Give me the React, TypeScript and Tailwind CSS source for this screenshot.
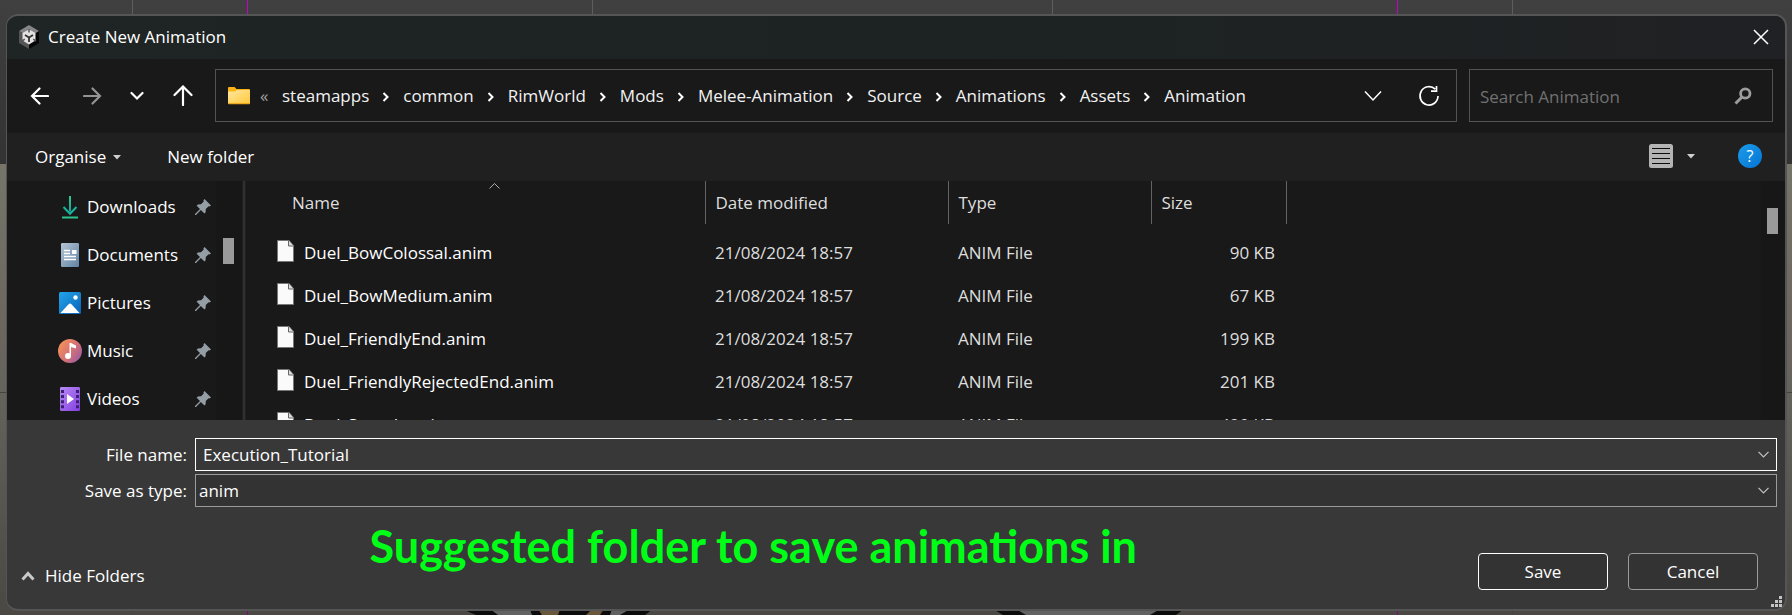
import React from "react";

const crumbs = ["steamapps", "common", "RimWorld", "Mods", "Melee-Animation", "Source", "Animations", "Assets", "Animation"];

const files = [
  { name: "Duel_BowColossal.anim", size: "90 KB" },
  { name: "Duel_BowMedium.anim", size: "67 KB" },
  { name: "Duel_FriendlyEnd.anim", size: "199 KB" },
  { name: "Duel_FriendlyRejectedEnd.anim", size: "201 KB" },
  { name: "Duel_Swords.anim", size: "420 KB" },
];

function UnityIcon() {
  return (
    <svg width="20" height="24" viewBox="0 0 20 24">
      <path d="M10 0 20 6V18L10 24V12Z" fill="#060606" />
      <path d="M10 0 20 6 10 12 0 6Z" fill="#868686" />
      <path d="M0 6 10 12V24L0 18Z" fill="#555" />
      <path d="M10 4.500 16.500 8V15.500L10 19.500 3.500 15.500V8Z" fill="#e2e2e2" />
      <path d="M10 12.500v4.500M10 12.500 6 10M10 12.500l4-2.500" stroke="#333" strokeWidth="1.800" />
      <path d="M10 4v3.500M3 16l2.800-1.800M17 16l-2.800-1.800" stroke="#555" strokeWidth="1.500" />
    </svg>
  );
}

function FolderIcon() {
  return (
    <svg width="22" height="18" viewBox="0 0 22 18" className="shrink-0">
      <defs>
        <linearGradient id="fold" x1="0" y1="0" x2="1" y2="1">
          <stop offset="0" stopColor="#ffe7a0" />
          <stop offset="1" stopColor="#ffc93c" />
        </linearGradient>
      </defs>
      <path d="M0 1q0-1 1-1h5.500l2 2H21q1 0 1 1v5H0Z" fill="#fbb416" />
      <path d="M0 4.500h7L9 3h13v13H0Z" fill="url(#fold)" />
      <path d="M0 16h22v.500q0 .800-.800.800H.800Q0 17.300 0 16.500Z" fill="#f0a81a" />
    </svg>
  );
}

function Crumb({ text, last }: { text: string; last: boolean }) {
  return (
    <li className="flex items-center">
      <a href="#" className="text-[#f2f2f2]">{text}</a>
      {!last && (
        <svg width="34" height="12" viewBox="0 0 34 12" className="mt-0.5">
          <path d="m14.500 2 4 4-4 4" fill="none" stroke="#fff" strokeWidth="2" />
        </svg>
      )}
    </li>
  );
}

function Pin() {
  return (
    <svg width="16" height="16" viewBox="0 0 16 16" className="shrink-0">
      <path d="M9.500 0 16 6.500 14.500 7.600 13.600 7.200 10.800 10 10.600 13.300 9.400 14.400 5.900 11 1 16H0v-1L5 10.100 1.700 6.700 2.800 5.500 6 5.300 8.800 2.500 8.400 1.400Z" fill="#949ea5" />
    </svg>
  );
}

function DownloadsIcon() {
  return (
    <svg width="22" height="24" viewBox="0 0 22 24">
      <defs>
        <linearGradient id="dl" x1="0" y1="0" x2="0" y2="1">
          <stop offset="0" stopColor="#2fc98a" />
          <stop offset="1" stopColor="#10a5a0" />
        </linearGradient>
      </defs>
      <path d="M10 1h2v15.500h-2Z" fill="url(#dl)" />
      <path d="m4.500 12 6.500 6.800 6.500-6.800" fill="none" stroke="#17b49a" strokeWidth="2" />
      <path d="M3 21.500h16v2H3Z" fill="#2cc48e" />
    </svg>
  );
}

function DocumentsIcon() {
  return (
    <svg width="22" height="24" viewBox="0 0 22 24">
      <defs>
        <linearGradient id="doc" x1="0" y1="0" x2="1" y2="1">
          <stop offset="0" stopColor="#b4c6d6" />
          <stop offset="1" stopColor="#6283a3" />
        </linearGradient>
      </defs>
      <rect x="2" width="18" height="24" rx="1.200" fill="url(#doc)" />
      <path d="M5 7.500h6M5 10.500h6M5 13.500h12M5 16.500h12" stroke="#fff" strokeWidth="1.300" />
      <rect x="13" y="7" width="4.500" height="4" fill="#fff" />
    </svg>
  );
}

function PicturesIcon() {
  return (
    <svg width="22" height="24" viewBox="0 0 22 24">
      <defs>
        <linearGradient id="pic" x1="0" y1="0" x2="1" y2="1">
          <stop offset="0" stopColor="#22a5ea" />
          <stop offset="1" stopColor="#0a62b8" />
        </linearGradient>
      </defs>
      <rect y="1" width="22" height="22" rx="1.500" fill="url(#pic)" />
      <path d="m1.500 22 8.300-9q1.200-1.200 2.400 0l8.300 9Z" fill="#fff" />
      <circle cx="16.500" cy="6.500" r="2.200" fill="#fff" />
    </svg>
  );
}

function MusicIcon() {
  return (
    <svg width="24" height="24" viewBox="0 0 24 24" className="-mx-px">
      <defs>
        <linearGradient id="mus" x1="0" y1="0.200" x2="1" y2="0.900">
          <stop offset="0" stopColor="#f79256" />
          <stop offset="0.600" stopColor="#cd6d7c" />
          <stop offset="1" stopColor="#9159ab" />
        </linearGradient>
      </defs>
      <circle cx="12" cy="12" r="12" fill="url(#mus)" />
      <circle cx="10" cy="17" r="3" fill="#fff" />
      <path d="M11.500 4h1.500l5 2.500v3l-5-1.600V17h-1.500Z" fill="#fff" />
    </svg>
  );
}

function VideosIcon() {
  return (
    <svg width="22" height="24" viewBox="0 0 22 24">
      <defs>
        <linearGradient id="vid" x1="0" y1="0" x2="1" y2="1">
          <stop offset="0" stopColor="#b98af5" />
          <stop offset="1" stopColor="#8340e0" />
        </linearGradient>
      </defs>
      <rect x="1" width="20" height="24" rx="1.300" fill="url(#vid)" />
      <path d="M3.500 3v18.500M18.500 3v18.500" stroke="#3c2170" strokeWidth="3" strokeDasharray="3 2.100" />
      <path d="M8 7v10l7-5Z" fill="#fff" />
    </svg>
  );
}

const places = [
  { name: "Downloads", icon: <DownloadsIcon /> },
  { name: "Documents", icon: <DocumentsIcon /> },
  { name: "Pictures", icon: <PicturesIcon /> },
  { name: "Music", icon: <MusicIcon /> },
  { name: "Videos", icon: <VideosIcon /> },
];

function FileIcon() {
  return (
    <svg width="17" height="22" viewBox="0 0 17 22" className="mb-1 shrink-0">
      <path d="M.500.500H12L16.500 5.500v16H.500Z" fill="#fafafa" stroke="#777" />
      <path d="M11.500.500v5.500h5" fill="#dcdcdc" stroke="#666" />
    </svg>
  );
}

function Caret() {
  return (
    <svg width="8" height="5" viewBox="0 0 8 5">
      <path d="M0 0h8L4 4.500Z" fill="#d0d0d0" />
    </svg>
  );
}

function ComboArrow() {
  return (
    <svg width="11" height="7" viewBox="0 0 11 7" className="pointer-events-none absolute right-2 top-[13px]">
      <path d="m.500.800 5 5 5-5" fill="none" stroke="#c4c4c4" strokeWidth="1.200" />
    </svg>
  );
}

function Backdrop() {
  return (
    <div className="absolute inset-0 -z-10 flex flex-col bg-[#5f5c56]" aria-hidden="true">
      <div className="h-[164px] bg-linear-to-b from-[#404040] to-[#333333]" />
      <div className="flex-1 bg-linear-to-b from-[#777469] via-[#66625c] to-[#4b4844]" />
      <svg className="absolute inset-0 size-full" viewBox="0 0 1792 615" preserveAspectRatio="none">
        <path d="M132.500 0v164M592.500 0v164M1052.500 0v164M1512.500 0v164" stroke="#5e5e5e" />
        <path d="M132.500 609v6M1512.500 609v6M0 392.500h6M1786 392.500h6" stroke="#45433f" />
        <path d="M462 609h178l-4 6H476ZM628 609h25l-8 6h-25ZM993 609h191l-8 6h-173Z" fill="#0b0b0b" />
        <path d="M490 609h40l2 6h-34ZM612 609h18l-10 6h-10ZM1016 609h144l-10 6h-124Z" fill="#626262" />
        <path d="M538 609h22l-2 6h-16ZM592 609h12l-4 6h-14Z" fill="#6a563a" />
        <path d="M247.500 0v14M1397.500 0v14" stroke="#c800c8" />
        <path d="M247.500 609v6M1397.500 609v6" stroke="#7d0a7d" />
      </svg>
    </div>
  );
}

export default function App() {
  return (
    <div className="relative isolate min-h-screen overflow-hidden pb-1 pl-1.5 pr-[5px] pt-3.5 font-['Open_Sans',sans-serif] text-[17px] leading-6 text-white">
      <Backdrop />
      <main className="overflow-hidden rounded-xl border-2 border-l-1 border-[#555] bg-[#383838]">
        <header className="flex h-[43px] items-center bg-linear-to-r from-[#1f2524] via-[#1c2322] to-[#202124] pb-0.5 pl-3 pr-4">
          <UnityIcon />
          <h1 className="ml-[9px] flex-1">Create New Animation</h1>
          <button aria-label="Close" className="flex h-8 items-center">
            <svg width="16" height="16" viewBox="0 0 16 16"><path d="m1 1 14 14M15 1 1 15" stroke="#fff" strokeWidth="1.500" /></svg>
          </button>
        </header>

        <nav className="flex h-[74px] items-center bg-[#191919] pb-px pr-3" aria-label="Location">
          <div className="flex w-52 shrink-0 items-center pl-[23px]">
            <button aria-label="Back">
              <svg width="19" height="18" viewBox="0 0 19 18"><path d="M18 9H2M9.500 1.500 2 9l7.500 7.500" fill="none" stroke="#fff" strokeWidth="2.200" strokeLinecap="round" /></svg>
            </button>
            <button aria-label="Forward" className="ml-[34px]">
              <svg width="19" height="18" viewBox="0 0 19 18"><path d="M1 9h16M9.500 1.500 17 9l-7.500 7.500" fill="none" stroke="#949494" strokeWidth="2.200" strokeLinecap="round" /></svg>
            </button>
            <button aria-label="Recent locations" className="ml-7">
              <svg width="14" height="10" viewBox="0 0 14 10"><path d="m1.500 2 5.500 5.500L12.500 2" fill="none" stroke="#fff" strokeWidth="2.200" strokeLinecap="round" /></svg>
            </button>
            <button aria-label="Up" className="ml-[29px]">
              <svg width="20" height="21" viewBox="0 0 20 21"><path d="M10 20V2M1.500 10 10 1.500l8.500 8.500" fill="none" stroke="#fff" strokeWidth="2.200" strokeLinecap="round" /></svg>
            </button>
          </div>
          <div className="flex h-[53px] min-w-0 flex-1 items-center border border-[#535353] pl-3 pr-4">
            <FolderIcon />
            <span className="ml-2.5 w-[22px] text-[#a0a0a0]">«</span>
            <ol className="flex flex-1 items-center">
              {crumbs.map((c, i) => <Crumb key={c} text={c} last={i === crumbs.length - 1} />)}
            </ol>
            <button aria-label="Previous locations">
              <svg width="18" height="12" viewBox="0 0 18 12"><path d="m1 1.500 8 8.500 8-8.500" fill="none" stroke="#fff" strokeWidth="1.500" /></svg>
            </button>
            <button aria-label="Refresh" className="ml-9">
              <svg width="22" height="22" viewBox="0 0 22 22"><path d="M17.200 4.200A9 9.200 0 1 0 20 11M18.500 1v5.200h-5.500" fill="none" stroke="#fff" strokeWidth="1.700" /></svg>
            </button>
          </div>
          <label className="ml-3 flex h-[53px] w-[304px] items-center border border-[#535353] pl-2.5 pr-5">
            <input type="search" aria-label="Search Animation" placeholder="Search Animation" className="min-w-0 flex-1 bg-transparent pt-0.5 outline-none placeholder:text-[#717171]" />
            <svg width="18" height="18" viewBox="0 0 18 18"><circle cx="11.300" cy="6.500" r="4.700" fill="none" stroke="#9c9c9c" strokeWidth="2.800" /><path d="m8 10-6.500 6.500" stroke="#9c9c9c" strokeWidth="3" /></svg>
          </label>
        </nav>

        <div className="flex h-12 items-center bg-[#202020] pb-0.5 pl-7 pr-[23px]" role="toolbar" aria-label="Folder actions">
          <button className="flex items-center gap-[7px] pt-0.5">Organise <Caret /></button>
          <button className="ml-[46px] pt-0.5">New folder</button>
          <button aria-label="Change view" className="ml-auto flex items-center gap-3.5">
            <svg width="24" height="24" viewBox="0 0 24 24"><rect width="24" height="24" rx="2.500" fill="#b4b4b4" /><path d="M3 4.500h18M3 9.500h18M3 14.500h18M3 19.500h18" stroke="#0c0c0c" strokeWidth="1.200" /></svg>
            <Caret />
          </button>
          <button aria-label="Help" className="ml-[43px] size-6 rounded-full bg-linear-to-br from-[#1c9cea] to-[#0574d4] text-base leading-6">?</button>
        </div>

        <div className="flex h-[239px] overflow-hidden bg-[#191919]">
          <ul className="w-[209px] shrink-0 pl-[52px] pt-0.5">
            {places.map((p) => (
              <li key={p.name} className="flex h-12 items-center">
                <a href="#" className="flex flex-1 items-center gap-1.5">{p.icon}{p.name}</a>
                <Pin />
                <span className="w-[5px]" />
              </li>
            ))}
          </ul>
          <div className="w-[26px] shrink-0 bg-[#171717] pl-[7px] pt-[57px]"><div className="h-[26px] w-[11px] bg-[#9a9a9a]" /></div>
          <div className="w-[4px] shrink-0 border-x border-[#202020] bg-[#303030]" />
          <div className="relative min-w-0 flex-1">
            <svg width="11" height="6" viewBox="0 0 11 6" className="absolute left-[243px] top-0.5"><path d="m.500 5.500 5-5 5 5" fill="none" stroke="#b0b0b0" /></svg>
            <table className="w-[1040px] table-fixed border-collapse text-left text-[#dedede]">
              <colgroup>
                <col className="w-[459px]" /><col className="w-[243px]" /><col className="w-[203px]" /><col className="w-[135px]" />
              </colgroup>
              <thead>
                <tr className="h-[43px]">
                  <th className="border-r border-[#636363] py-0 pl-[46px] font-normal">Name</th>
                  <th className="border-r border-[#636363] py-0 pl-2.5 font-normal">Date modified</th>
                  <th className="border-r border-[#636363] py-0 pl-2.5 font-normal">Type</th>
                  <th className="border-r border-[#636363] py-0 pl-2.5 font-normal">Size</th>
                </tr>
              </thead>
              <tbody>
                <tr className="h-[7px]"><td colSpan={4} className="p-0" /></tr>
                {files.map((f) => (
                  <tr key={f.name} className="h-[43px]">
                    <td className="py-0 pl-[31px] text-white"><span className="flex items-center gap-2.5"><FileIcon />{f.name}</span></td>
                    <td className="py-0 pl-2.5">21/08/2024 18:57</td>
                    <td className="py-0 pl-2.5">ANIM File</td>
                    <td className="py-0 pr-[11px] text-right">{f.size}</td>
                  </tr>
                ))}
              </tbody>
            </table>
          </div>
          <div className="w-6 shrink-0 bg-[#171717] pl-1.5 pt-[27px]"><div className="h-[26px] w-[11px] bg-[#9a9a9a]" /></div>
        </div>

        <form className="pb-[19px] pr-2 pt-[18px]" onSubmit={(e) => e.preventDefault()}>
          <div className="mb-[3px] flex items-center">
            <label htmlFor="fname" className="w-[188px] pr-2 text-right">File name:</label>
            <div className="relative flex-1">
              <input id="fname" defaultValue="Execution_Tutorial" className="block h-[33px] w-full border border-white bg-[#383838] px-[7px] outline-none" />
              <ComboArrow />
            </div>
          </div>
          <div className="flex items-center">
            <label htmlFor="ftype" className="w-[188px] pr-2 pt-px text-right">Save as type:</label>
            <div className="relative flex-1">
              <select id="ftype" className="block h-[33px] w-full appearance-none border border-[#9b9b9b] bg-[#333] px-[3px] pt-px outline-none"><option>anim</option></select>
              <ComboArrow />
            </div>
          </div>
          <div className="flex h-[83px] items-end pl-3.5 pr-[19px]">
            <button type="button" className="mb-0.5 flex items-center gap-2.5">
              <svg width="14" height="10" viewBox="0 0 14 10"><path d="m1.500 8.500 5.500-6 5.500 6" fill="none" stroke="#c8c8c8" strokeWidth="3" /></svg>
              Hide Folders
            </button>
            <p className="ml-[225px] self-start pt-3 font-['Lato',sans-serif] text-[45px] font-bold leading-[54px] text-[#00ff16]">Suggested folder to save animations in</p>
            <button type="submit" className="ml-auto h-[37px] w-[130px] rounded-[4px] border border-white bg-[#333]">Save</button>
            <button type="button" className="ml-5 h-[37px] w-[130px] rounded-[4px] border border-[#9b9b9b] bg-[#333]">Cancel</button>
          </div>
        </form>
        <svg width="11" height="11" viewBox="0 0 11 11" className="absolute bottom-2 right-2.5"><path d="M8 0h3v3H8ZM4 4h3v3H4ZM8 4h3v3H8ZM0 8h3v3H0ZM4 8h3v3H4ZM8 8h3v3H8Z" fill="#c4c4c4" /></svg>
      </main>
    </div>
  );
}
